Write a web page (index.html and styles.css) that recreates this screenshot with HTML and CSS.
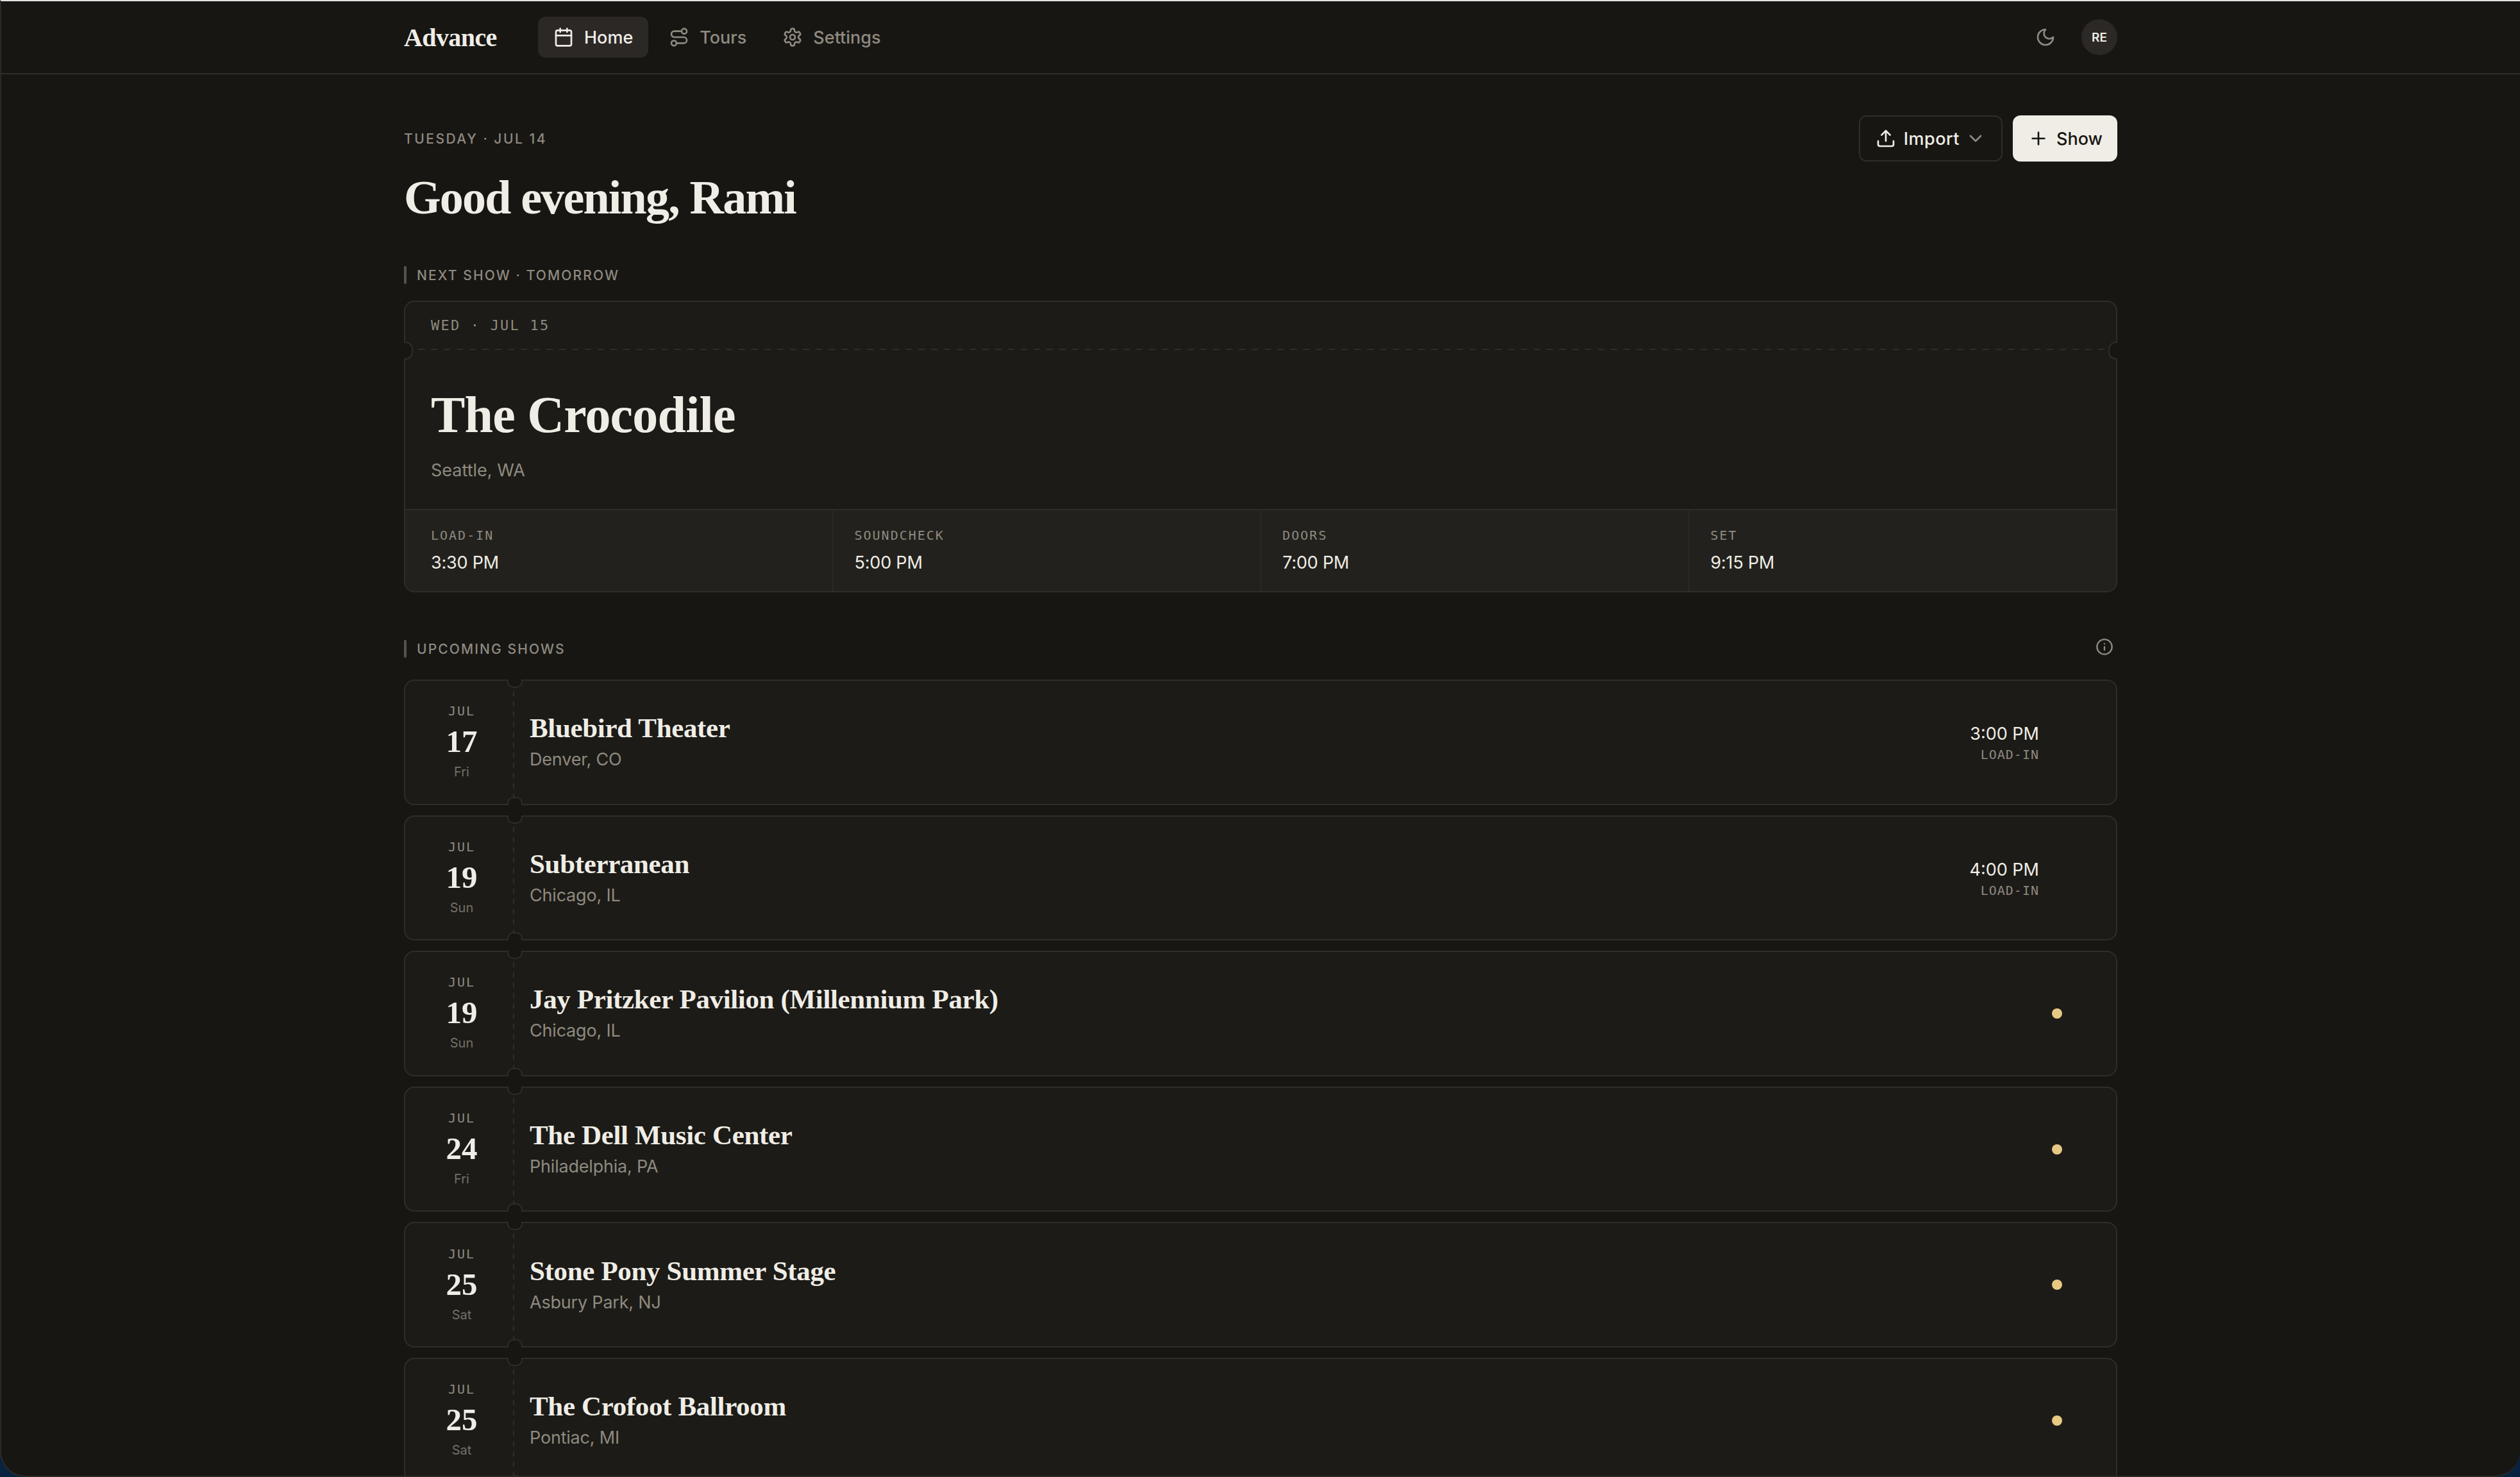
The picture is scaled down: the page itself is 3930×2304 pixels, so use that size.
FILE: index.html
```
<!DOCTYPE html>
<html lang="en">
<head>
    <meta charset="UTF-8">
    <meta name="viewport" content="width=device-width, initial-scale=1.0">
    <title>Advance</title>
    <link rel="stylesheet" href="styles.css">
</head>
<body>
<div class="window">

    <header class="topbar">
        <div class="container topbar-inner">
            <a class="brand">Advance</a>
            <nav class="nav">
                <a class="nav-link active">
                    <svg class="icon" viewBox="0 0 24 24"><path d="M8 2v4"/><path d="M16 2v4"/><rect width="18" height="18" x="3" y="4" rx="2"/><path d="M3 10h18"/></svg>
                    <span>Home</span>
                </a>
                <a class="nav-link">
                    <svg class="icon" viewBox="0 0 24 24"><circle cx="6" cy="19" r="3"/><path d="M9 19h8.5a3.5 3.5 0 0 0 0-7h-11a3.5 3.5 0 0 1 0-7H15"/><circle cx="18" cy="5" r="3"/></svg>
                    <span>Tours</span>
                </a>
                <a class="nav-link">
                    <svg class="icon" viewBox="0 0 24 24"><path d="M12.22 2h-.44a2 2 0 0 0-2 2v.18a2 2 0 0 1-1 1.73l-.43.25a2 2 0 0 1-2 0l-.15-.08a2 2 0 0 0-2.73.73l-.22.38a2 2 0 0 0 .73 2.73l.15.1a2 2 0 0 1 1 1.72v.51a2 2 0 0 1-1 1.74l-.15.09a2 2 0 0 0-.73 2.73l.22.38a2 2 0 0 0 2.73.73l.15-.08a2 2 0 0 1 2 0l.43.25a2 2 0 0 1 1 1.73V20a2 2 0 0 0 2 2h.44a2 2 0 0 0 2-2v-.18a2 2 0 0 1 1-1.73l.43-.25a2 2 0 0 1 2 0l.15.08a2 2 0 0 0 2.73-.73l.22-.39a2 2 0 0 0-.73-2.73l-.15-.08a2 2 0 0 1-1-1.74v-.5a2 2 0 0 1 1-1.74l.15-.09a2 2 0 0 0 .73-2.73l-.22-.38a2 2 0 0 0-2.73-.73l-.15.08a2 2 0 0 1-2 0l-.43-.25a2 2 0 0 1-1-1.73V4a2 2 0 0 0-2-2z"/><circle cx="12" cy="12" r="3"/></svg>
                    <span>Settings</span>
                </a>
            </nav>
            <div class="topbar-right">
                <svg class="icon" viewBox="0 0 24 24"><path d="M12 3a6 6 0 0 0 9 9 9 9 0 1 1-9-9Z"/></svg>
                <div class="avatar">RE</div>
            </div>
        </div>
    </header>

    <main class="container main">
        <div class="intro">
            <p class="date">TUESDAY · JUL 14</p>
            <div class="actions">
                <button class="btn btn-outline" type="button">
                    <svg class="icon" viewBox="0 0 24 24"><path d="M21 15v4a2 2 0 0 1-2 2H5a2 2 0 0 1-2-2v-4"/><path d="M17 8l-5-5-5 5"/><path d="M12 3v12"/></svg>
                    <span>Import</span>
                    <svg class="icon chevron" viewBox="0 0 24 24"><path d="m6 9 6 6 6-6"/></svg>
                </button>
                <button class="btn btn-primary" type="button">
                    <svg class="icon" viewBox="0 0 24 24"><path d="M5 12h14"/><path d="M12 5v14"/></svg>
                    <span>Show</span>
                </button>
            </div>
        </div>
        <h1>Good evening, Rami</h1>

        <h2 class="section-title">NEXT SHOW · TOMORROW</h2>

        <article class="ticket">
            <div class="ticket-head">WED · JUL 15</div>
            <div class="ticket-tear"></div>
            <div class="ticket-body">
                <h3>The Crocodile</h3>
                <p class="city">Seattle, WA</p>
            </div>
            <dl class="times">
                <div><dt>LOAD-IN</dt><dd>3:30 PM</dd></div>
                <div><dt>SOUNDCHECK</dt><dd>5:00 PM</dd></div>
                <div><dt>DOORS</dt><dd>7:00 PM</dd></div>
                <div><dt>SET</dt><dd>9:15 PM</dd></div>
            </dl>
        </article>

        <div class="section-row">
            <h2 class="section-title">UPCOMING SHOWS</h2>
            <svg class="icon info-icon" viewBox="0 0 24 24"><circle cx="12" cy="12" r="10"/><path d="M12 16v-4"/><path d="M12 8h.01"/></svg>
        </div>

        <div class="shows">
            <article class="show">
                <div class="stub"><span class="month">JUL</span><span class="day">17</span><span class="weekday">Fri</span></div>
                <div class="venue"><h3>Bluebird Theater</h3><p class="city">Denver, CO</p></div>
                <div class="load-in"><span class="time">3:00 PM</span><span class="label">LOAD-IN</span></div>
            </article>
            <article class="show">
                <div class="stub"><span class="month">JUL</span><span class="day">19</span><span class="weekday">Sun</span></div>
                <div class="venue"><h3>Subterranean</h3><p class="city">Chicago, IL</p></div>
                <div class="load-in"><span class="time">4:00 PM</span><span class="label">LOAD-IN</span></div>
            </article>
            <article class="show">
                <div class="stub"><span class="month">JUL</span><span class="day">19</span><span class="weekday">Sun</span></div>
                <div class="venue"><h3>Jay Pritzker Pavilion (Millennium Park)</h3><p class="city">Chicago, IL</p></div>
                <span class="dot"></span>
            </article>
            <article class="show">
                <div class="stub"><span class="month">JUL</span><span class="day">24</span><span class="weekday">Fri</span></div>
                <div class="venue"><h3>The Dell Music Center</h3><p class="city">Philadelphia, PA</p></div>
                <span class="dot"></span>
            </article>
            <article class="show">
                <div class="stub"><span class="month">JUL</span><span class="day">25</span><span class="weekday">Sat</span></div>
                <div class="venue"><h3>Stone Pony Summer Stage</h3><p class="city">Asbury Park, NJ</p></div>
                <span class="dot"></span>
            </article>
            <article class="show">
                <div class="stub"><span class="month">JUL</span><span class="day">25</span><span class="weekday">Sat</span></div>
                <div class="venue"><h3>The Crofoot Ballroom</h3><p class="city">Pontiac, MI</p></div>
                <span class="dot"></span>
            </article>
        </div>
    </main>

</div>
</body>
</html>
```
FILE: styles.css
```
* {
    box-sizing: border-box;
    margin: 0;
    padding: 0;
}

body {
    height: 2304px;
    overflow: hidden;
    background-color: #08233f;
    color: #f0ede6;
    font-family: Inter, "Liberation Sans", sans-serif;
    font-size: 27px;
}

.window {
    height: 2304px;
    overflow: hidden;
    background-color: #171613;
    border-top: 2px solid #e2e2e2;
    border-left: 2px solid #2b2a28;
    border-bottom: 2px solid #2b2a28;
    border-radius: 0 0 40px 40px;
}

.container {
    width: 2672px;
    margin: 0 auto;
}

.icon {
    width: 32px;
    height: 32px;
    flex-shrink: 0;
    fill: none;
    stroke: currentColor;
    stroke-width: 2;
    stroke-linecap: round;
    stroke-linejoin: round;
}

/* Top bar */
.topbar {
    height: 114px;
    border-bottom: 2px solid #2e2d29;
}

.topbar-inner {
    height: 112px;
    display: flex;
    align-items: center;
}

.brand {
    width: 209px;
    font-family: "Liberation Serif", serif;
    font-size: 40px;
    font-weight: bold;
    letter-spacing: -0.6px;
}

.nav {
    display: flex;
    gap: 8px;
}

.nav-link {
    height: 64px;
    padding: 0 24px;
    display: flex;
    align-items: center;
    gap: 16px;
    border-radius: 12px;
    color: #8f8a80;
    font-weight: 500;
}

.nav-link.active {
    background-color: #2b2826;
    color: #f0ede6;
}

.topbar-right {
    margin-left: auto;
    display: flex;
    align-items: center;
    gap: 40px;
    color: #8f8a80;
}

.avatar {
    width: 56px;
    height: 56px;
    display: flex;
    align-items: center;
    justify-content: center;
    border-radius: 50%;
    background-color: #2b2826;
    color: #f0ede6;
    font-size: 19px;
    font-weight: 600;
}

/* Intro */
.main {
    padding-top: 64px;
}

.intro {
    height: 72px;
    display: flex;
    align-items: center;
    justify-content: space-between;
}

.date {
    font-size: 21px;
    font-weight: 500;
    letter-spacing: 2.5px;
    color: #8f8a80;
}

.actions {
    display: flex;
    gap: 16px;
}

.btn {
    height: 72px;
    padding: 0 24px;
    display: flex;
    align-items: center;
    gap: 12px;
    border: none;
    border-radius: 12px;
    font-family: inherit;
    font-size: 27px;
    font-weight: 500;
}

.btn-outline {
    background-color: transparent;
    border: 2px solid #2e2d29;
    color: #f0ede6;
    letter-spacing: 0.5px;
}

.btn-primary {
    padding-right: 23px;
    background-color: #f0ede6;
    color: #171613;
}

.chevron {
    margin-left: -3px;
    color: #8f8a80;
}

h1 {
    margin-top: 16px;
    font-family: "Liberation Serif", serif;
    font-size: 74px;
    line-height: 80px;
    font-weight: bold;
    letter-spacing: -1.8px;
}

/* Sections */
.section-title {
    height: 28px;
    display: flex;
    align-items: center;
    gap: 16px;
    font-size: 21px;
    font-weight: 500;
    letter-spacing: 2.1px;
    color: #8f8a80;
}

.section-title::before {
    content: "";
    width: 4px;
    height: 28px;
    border-radius: 2px;
    background-color: #55534e;
}

h1 + .section-title {
    margin-top: 67px;
}

.section-row {
    margin-top: 65px;
    height: 40px;
    display: flex;
    align-items: center;
    justify-content: space-between;
}

.section-row .section-title {
    margin-top: 6px;
}

.info-icon {
    width: 28px;
    height: 28px;
    margin-right: 6px;
    color: #8f8a80;
}

/* Next show */
.ticket {
    position: relative;
    margin-top: 26px;
    background-color: #1c1b17;
    border: 2px solid #2e2d29;
    border-radius: 16px;
}

.ticket-head {
    height: 73px;
    padding-left: 40px;
    font-family: "DejaVu Sans Mono", monospace;
    font-size: 22px;
    line-height: 73px;
    letter-spacing: 2.2px;
    color: #8f8a80;
}

.ticket-tear {
    height: 2px;
    margin: 0 18px 0 20px;
    background: repeating-linear-gradient(to right, #2e2d29 0 10px, transparent 10px 20px);
}

/* Punched notches at both ends of the tear line */
.ticket::before,
.ticket::after {
    content: "";
    position: absolute;
    top: 62px;
    width: 12px;
    height: 24px;
    background-color: #171613;
    border: 2px solid #2e2d29;
}

.ticket::before {
    left: -2px;
    border-left: none;
    border-radius: 0 12px 12px 0;
}

.ticket::after {
    right: -2px;
    border-right: none;
    border-radius: 12px 0 0 12px;
}

.ticket-body {
    height: 248px;
    padding: 57px 40px 0;
}

.ticket-body h3 {
    font-family: "Liberation Serif", serif;
    font-size: 80px;
    line-height: 88px;
    font-weight: bold;
    letter-spacing: -0.8px;
}

.city {
    line-height: 40px;
    color: #8f8a80;
}

.ticket-body .city {
    margin-top: 23px;
}

.times {
    display: grid;
    grid-template-columns: repeat(4, 1fr);
    gap: 2px;
    background-color: #292824;
    border-top: 2px solid #2e2d29;
    border-radius: 0 0 14px 14px;
    overflow: hidden;
}

.times div {
    height: 126px;
    padding: 25px 33px 0;
    background-color: #22211d;
}

.times div:first-child {
    padding-left: 40px;
}

.times dt {
    font-family: "DejaVu Sans Mono", monospace;
    font-size: 20px;
    line-height: 28px;
    letter-spacing: 2px;
    color: #8f8a80;
}

.times dd {
    margin-top: 9px;
    line-height: 40px;
    letter-spacing: -0.2px;
}

/* Upcoming shows */
.shows {
    margin-top: 31px;
    display: flex;
    flex-direction: column;
    gap: 16px;
}

.show {
    position: relative;
    height: 195.6px;
    padding-right: 84px;
    display: flex;
    align-items: center;
    background-color: #1c1b17;
    border: 2px solid #2e2d29;
    border-radius: 16px;
}

.show::before,
.show::after {
    content: "";
    position: absolute;
    left: 159px;
    width: 20px;
    height: 11px;
    background-color: #171613;
    border: 2px solid #2e2d29;
}

.show::before {
    top: -2px;
    border-top: none;
    border-radius: 0 0 10px 10px;
}

.show::after {
    bottom: -2px;
    border-bottom: none;
    border-radius: 10px 10px 0 0;
}

.stub {
    width: 176px;
    height: 100%;
    padding-bottom: 2px;
    display: flex;
    flex-direction: column;
    align-items: center;
    justify-content: center;
    background: repeating-linear-gradient(to bottom, #2e2d29 0 8px, transparent 8px 16px) 168px 16px / 2px 168px no-repeat;
}

.month {
    font-family: "DejaVu Sans Mono", monospace;
    font-size: 20px;
    line-height: 28px;
    letter-spacing: 2px;
    color: #8f8a80;
}

.day {
    margin: 8px 0 7px;
    font-family: "Liberation Serif", serif;
    font-size: 49px;
    line-height: 52px;
    font-weight: bold;
}

.weekday {
    font-size: 20px;
    line-height: 28px;
    color: #74706a;
}

.venue {
    flex: 1;
    padding: 2px 0 0 18px;
}

.venue h3 {
    margin-bottom: 5px;
    font-family: "Liberation Serif", serif;
    font-size: 43px;
    line-height: 48px;
    font-weight: bold;
    letter-spacing: -0.35px;
}

.venue .city {
    letter-spacing: -0.2px;
}

.load-in {
    margin-right: 36px;
    padding-bottom: 1px;
    display: flex;
    flex-direction: column;
    align-items: flex-end;
}

.time {
    line-height: 40px;
}

.label {
    font-family: "DejaVu Sans Mono", monospace;
    font-size: 20px;
    line-height: 24px;
    letter-spacing: 1px;
    color: #8f8a80;
}

.dot {
    width: 16px;
    height: 16px;
    border-radius: 50%;
    background-color: #e8c983;
}
```
